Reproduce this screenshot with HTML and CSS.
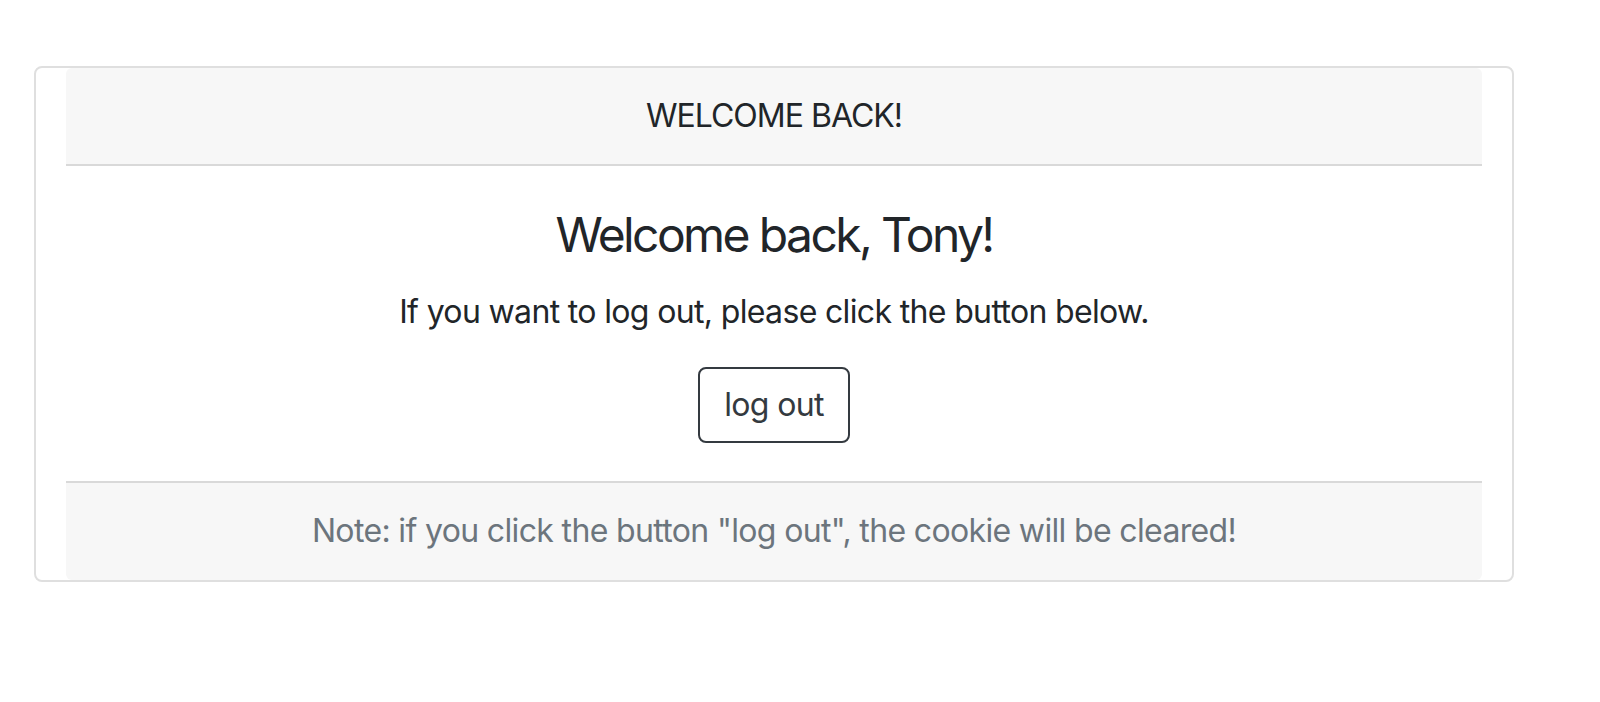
FILE: index.html
```html
<!DOCTYPE html>
<html lang="en">
<head>
<meta charset="utf-8">
<title>Welcome back</title>
<link rel="stylesheet" href="styles.css">
</head>
<body>
  <div class="outer">
    <div class="card">
      <div class="card-header">WELCOME BACK!</div>
      <div class="card-body">
        <h4 class="card-title">Welcome back, Tony!</h4>
        <p class="card-text">If you want to log out, please click the button below.</p>
        <button class="btn" type="button">log out</button>
      </div>
      <div class="card-footer">Note: if you click the button "log out", the cookie will be cleared!</div>
    </div>
  </div>
</body>
</html>
```

FILE: styles.css
```css
html, body {
  margin: 0;
  padding: 0;
  background: #fff;
}
body {
  font-family: Inter, "Noto Sans", "Liberation Sans", sans-serif;
  font-size: 32px;
  line-height: 48px;
  letter-spacing: -0.65px;
  color: #212529;
  padding: 66px 0 0 34px;
}
.outer {
  box-sizing: border-box;
  width: 1480px;
  border: 2px solid #dfdfdf;
  border-radius: 8px;
  padding: 0 30px;
}
.card {
  display: flex;
  flex-direction: column;
  text-align: center;
}
.card-header {
  background: #f7f7f7;
  border-bottom: 2px solid #d9d9d9;
  padding: 24px 40px;
  border-radius: 6px 6px 0 0;
  letter-spacing: -1px;
}
.card-body {
  padding: 40px 40px 38px;
}
.card-title {
  margin: 0 0 24px;
  font-size: 48px;
  line-height: 57.6px;
  font-weight: 400;
  letter-spacing: -2.6px;
}
.card-text {
  margin: 0 0 31px;
}
.btn {
  font-family: inherit;
  font-size: 32px;
  line-height: 48px;
  letter-spacing: -0.65px;
  color: #343a40;
  background: transparent;
  border: 2px solid #343a40;
  border-radius: 8px;
  padding: 12px 24px;
  cursor: pointer;
}
.card-footer {
  background: #f7f7f7;
  border-top: 2px solid #d9d9d9;
  padding: 24px 40px 25px;
  color: #6c757d;
  border-radius: 0 0 6px 6px;
}
```
